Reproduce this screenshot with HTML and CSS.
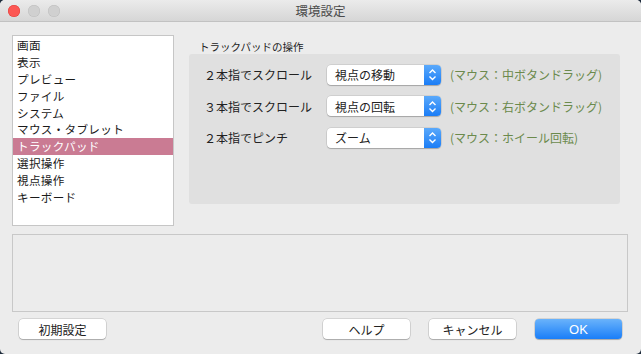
FILE: index.html
```html
<!DOCTYPE html>
<html lang="ja">
<head>
<meta charset="utf-8">
<link rel="stylesheet" href="styles.css">
</head>
<body>
<div class="window">
  <div class="titlebar">
    <div class="lights">
      <span class="light red"></span>
      <span class="light"></span>
      <span class="light"></span>
    </div>
    <div class="title">環境設定</div>
  </div>
  <div class="content">
    <div class="top">
      <ul class="list">
        <li>画面</li>
        <li>表示</li>
        <li>プレビュー</li>
        <li>ファイル</li>
        <li>システム</li>
        <li>マウス・タブレット</li>
        <li class="selected">トラックパッド</li>
        <li>選択操作</li>
        <li>視点操作</li>
        <li>キーボード</li>
      </ul>
      <div class="group">
        <div class="group-label">トラックパッドの操作</div>
        <div class="group-box">
          <div class="row">
            <span class="label">２本指でスクロール</span>
            <div class="popup"><span class="popup-text">視点の移動</span><span class="stepper"><svg width="17" height="21" viewBox="0 0 17 21"><path d="M5.5 9 L8.5 6 L11.5 9 M5.5 12.5 L8.5 15.5 L11.5 12.5" fill="none" stroke="#fff" stroke-width="1.4"/></svg></span></div>
            <span class="hint">(マウス：中ボタンドラッグ)</span>
          </div>
          <div class="row">
            <span class="label">３本指でスクロール</span>
            <div class="popup"><span class="popup-text">視点の回転</span><span class="stepper"><svg width="17" height="21" viewBox="0 0 17 21"><path d="M5.5 9 L8.5 6 L11.5 9 M5.5 12.5 L8.5 15.5 L11.5 12.5" fill="none" stroke="#fff" stroke-width="1.4"/></svg></span></div>
            <span class="hint">(マウス：右ボタンドラッグ)</span>
          </div>
          <div class="row">
            <span class="label">２本指でピンチ</span>
            <div class="popup"><span class="popup-text">ズーム</span><span class="stepper"><svg width="17" height="21" viewBox="0 0 17 21"><path d="M5.5 9 L8.5 6 L11.5 9 M5.5 12.5 L8.5 15.5 L11.5 12.5" fill="none" stroke="#fff" stroke-width="1.4"/></svg></span></div>
            <span class="hint">(マウス：ホイール回転)</span>
          </div>
        </div>
      </div>
    </div>
    <div class="info-box"></div>
    <div class="buttons">
      <button class="btn">初期設定</button>
      <div class="spacer"></div>
      <button class="btn">ヘルプ</button>
      <button class="btn">キャンセル</button>
      <button class="btn primary">OK</button>
    </div>
  </div>
</div>
</body>
</html>
```
FILE: styles.css
```css
html, body {
  margin: 0;
  padding: 0;
  background: #1d2b3b;
}
body {
  font-family: "Noto Sans CJK JP", "Noto Sans", sans-serif;
  color: #1a1a1a;
}
.window {
  width: 641px;
  height: 354px;
  background: #ececec;
  border-radius: 5px;
  overflow: hidden;
}
.titlebar {
  height: 21px;
  border-bottom: 1px solid #c2c2c2;
  background: linear-gradient(#ebebeb, #d6d6d6);
  display: flex;
  align-items: center;
  position: relative;
}
.lights {
  display: flex;
  gap: 8px;
  padding-left: 8px;
}
.light {
  width: 12px;
  height: 12px;
  border-radius: 50%;
  background: #d0d0d0;
  box-shadow: inset 0 0 0 0.5px #bdbdbd;
}
.light.red {
  background: #fc5753;
  box-shadow: inset 0 0 0 0.5px #df3d39;
}
.title {
  position: absolute;
  left: 0;
  right: 0;
  text-align: center;
  font-size: 12.5px;
  color: #4a4a4a;
  line-height: 21px;
}
.content {
  padding: 13px 13px 0 12px;
}
.top {
  display: flex;
  gap: 15px;
}
.list {
  list-style: none;
  margin: 0;
  padding: 1px 0;
  width: 160px;
  height: 187px;
  background: #fff;
  border: 1px solid #c6c6c6;
  font-size: 11.6px;
}
.list li {
  height: 16.9px;
  line-height: 16.9px;
  padding-left: 4px;
  white-space: nowrap;
  letter-spacing: 0.3px;
}
.list li.selected {
  background: #ca7b93;
  color: #fff;
}
.group {
  width: 431px;
  display: flex;
  flex-direction: column;
}
.group-label {
  font-size: 10.5px;
  line-height: 12px;
  padding: 6px 0 1px 10px;
  color: #222;
}
.group-box {
  height: 140px;
  background: #e0e0e0;
  border-radius: 3px;
  padding: 10px 0 0 15px;
  display: flex;
  flex-direction: column;
  gap: 10.5px;
}
.row {
  display: flex;
  align-items: center;
  height: 21px;
}
.label {
  width: 123px;
  font-size: 12px;
  color: #222;
  white-space: nowrap;
}
.popup {
  width: 114px;
  height: 20px;
  background: #fff;
  border-radius: 4px;
  box-shadow: 0 0 0 0.5px rgba(0,0,0,0.15), 0 1px 1px rgba(0,0,0,0.2);
  display: flex;
  align-items: center;
  overflow: hidden;
}
.popup-text {
  flex: 1;
  font-size: 12px;
  padding-left: 8px;
  color: #222;
}
.stepper {
  width: 17px;
  height: 20px;
  background: linear-gradient(#5aa9fb, #1b7df6);
  display: flex;
  align-items: center;
  justify-content: center;
}
.stepper svg {
  display: block;
}
.hint {
  margin-left: 9px;
  font-size: 12px;
  color: #6b8a4c;
  white-space: nowrap;
}
.info-box {
  margin-top: 8px;
  height: 76px;
  border: 1px solid #c8c8c8;
  background: #ececec;
}
.buttons {
  display: flex;
  align-items: center;
  margin-top: 7px;
  padding-left: 7px;
  padding-right: 6px;
  gap: 19px;
}
.spacer {
  flex: 1;
}
.btn {
  width: 87px;
  height: 20px;
  padding: 0;
  border: none;
  border-radius: 4px;
  background: #fff;
  box-shadow: 0 0 0 0.5px rgba(0,0,0,0.2), 0 1px 1px rgba(0,0,0,0.2);
  font-family: "Noto Sans CJK JP", "Noto Sans", sans-serif;
  font-size: 12px;
  color: #222;
}
.btn.primary {
  background: linear-gradient(#6ab3fb, #1a7ef8);
  color: #fff;
  font-family: "Liberation Sans", "Noto Sans", sans-serif;
  font-size: 13px;
}
```
